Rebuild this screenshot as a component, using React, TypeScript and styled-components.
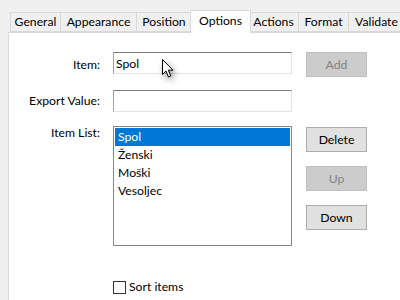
import styled, { createGlobalStyle } from 'styled-components';

const GlobalStyle = createGlobalStyle`
  html, body {
    margin: 0;
    padding: 0;
    background: #f0f0f0;
    font-family: "Segoe UI", Lato, "Liberation Sans", sans-serif;
    font-size: 12.2px;
    color: #000;
    overflow: hidden;
  }
`;

const Window = styled.div`
  position: relative;
  width: 400px;
  height: 300px;
  display: flex;
  flex-direction: column;
`;

const TabStrip = styled.div`
  display: flex;
  align-items: flex-end;
  padding: 12px 0 0 10px;
  height: 20px;
  position: relative;
  z-index: 1;
`;

const Tab = styled.div<{ $active?: boolean; $w: number }>`
  box-sizing: border-box;
  width: ${p => p.$w}px;
  height: ${p => (p.$active ? '23px' : '20px')};
  margin-bottom: ${p => (p.$active ? '-1px' : '0')};
  margin-left: ${p => (p.$active ? '-2px' : '0')};
  margin-right: ${p => (p.$active ? '-2px' : '0')};
  padding-top: ${p => (p.$active ? '2px' : '1px')};
  border: 1px solid #d9d9d9;
  border-bottom: ${p => (p.$active ? 'none' : '1px solid #d9d9d9')};
  border-left: ${p => (p.$active ? '1px solid #d9d9d9' : 'none')};
  background: ${p => (p.$active ? '#ffffff' : '#f0f0f0')};
  line-height: 16px;
  text-align: center;
  white-space: nowrap;
  flex-shrink: 0;
  position: relative;
  z-index: ${p => (p.$active ? 2 : 1)};

  &:first-child {
    border-left: 1px solid #d9d9d9;
  }
`;

const Panel = styled.div`
  flex: 1;
  margin-left: 8px;
  background: #ffffff;
  border-top: 1px solid #d9d9d9;
  border-left: 1px solid #d9d9d9;
  padding-top: 19px;
  display: flex;
  flex-direction: column;
`;

const Row = styled.div<{ $gap?: number }>`
  display: grid;
  grid-template-columns: 91px 179px 61px;
  column-gap: 13px;
  margin-top: ${p => p.$gap ?? 0}px;

  & > :nth-child(3) {
    margin-left: 1px;
  }
`;

const Label = styled.label<{ $top?: boolean }>`
  text-align: right;
  line-height: 16px;
  align-self: ${p => (p.$top ? 'start' : 'center')};
  margin-top: ${p => (p.$top ? '-1px' : '0')};
  white-space: nowrap;
`;

const TextBox = styled.div`
  box-sizing: border-box;
  height: 22px;
  border-top: 1px solid #7a7a7a;
  border-left: 1px solid #a0a0a0;
  border-right: 1px solid #e3e3e3;
  border-bottom: 1px solid #e3e3e3;
  padding: 2px 2px 0;
  line-height: 17px;
  align-self: start;
`;

const Button = styled.div<{ $disabled?: boolean }>`
  box-sizing: border-box;
  width: 61px;
  height: 25px;
  border: 1px solid ${p => (p.$disabled ? '#bfbfbf' : '#adadad')};
  background: ${p => (p.$disabled ? '#cccccc' : '#e1e1e1')};
  color: ${p => (p.$disabled ? '#838383' : '#000000')};
  display: flex;
  align-items: center;
  justify-content: center;
`;

const ButtonColumn = styled.div`
  display: flex;
  flex-direction: column;
  gap: 14px;
  padding-top: 1px;
`;

const ListBox = styled.div`
  box-sizing: border-box;
  height: 120px;
  border: 1px solid #828790;
  padding: 1px;
`;

const ListItem = styled.div<{ $selected?: boolean }>`
  height: 18px;
  line-height: 18px;
  padding-left: 3px;
  background: ${p => (p.$selected ? '#0078d7' : 'transparent')};
  color: ${p => (p.$selected ? '#ffffff' : '#000000')};
`;

const CheckRow = styled.div`
  display: flex;
  align-items: center;
  gap: 3px;
  margin: 33px 0 0 104px;
  line-height: 16px;
`;

const CheckBox = styled.div`
  box-sizing: border-box;
  width: 13px;
  height: 13px;
  border: 1px solid #333333;
  background: #ffffff;
`;

const Cursor = styled.svg`
  position: absolute;
  left: 161px;
  top: 58px;
  filter: drop-shadow(2px 3px 3px rgba(0, 0, 0, 0.45));
`;

const tabs: [string, number][] = [
  ['General', 51],
  ['Appearance', 76],
  ['Position', 55],
  ['Options', 61],
  ['Actions', 50],
  ['Format', 50],
  ['Validate', 56],
];
const items = ['Spol', 'Ženski', 'Moški', 'Vesoljec'];

export default function App() {
  return (
    <Window>
      <GlobalStyle />
      <TabStrip>
        {tabs.map(([t, w]) => (
          <Tab key={t} $w={w} $active={t === 'Options'}>
            {t}
          </Tab>
        ))}
      </TabStrip>
      <Panel>
        <Row>
          <Label>Item:</Label>
          <TextBox>Spol</TextBox>
          <Button $disabled>Add</Button>
        </Row>
        <Row $gap={13}>
          <Label>Export Value:</Label>
          <TextBox />
        </Row>
        <Row $gap={14}>
          <Label $top>Item List:</Label>
          <ListBox>
            {items.map((it, i) => (
              <ListItem key={it} $selected={i === 0}>
                {it}
              </ListItem>
            ))}
          </ListBox>
          <ButtonColumn>
            <Button>Delete</Button>
            <Button $disabled>Up</Button>
            <Button>Down</Button>
          </ButtonColumn>
        </Row>
        <CheckRow>
          <CheckBox />
          <span>Sort items</span>
        </CheckRow>
      </Panel>
      <Cursor width="14" height="22" viewBox="0 0 14 22">
        <path
          d="M1.5 1.5 L1.5 16.5 L5 13 L7.5 19 L9.8 18 L7.3 12.2 L12 12.2 Z"
          fill="#ffffff"
          stroke="#000000"
          strokeWidth="1"
          strokeLinejoin="miter"
        />
      </Cursor>
    </Window>
  );
}
